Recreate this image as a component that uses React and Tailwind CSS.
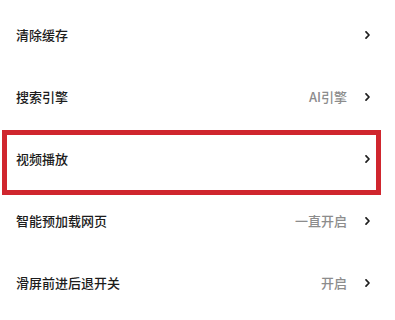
import React from 'react';

const rows = [
  { title: '清除缓存', value: '' },
  { title: '搜索引擎', value: 'AI引擎' },
  { title: '视频播放', value: '', highlight: true },
  { title: '智能预加载网页', value: '一直开启' },
  { title: '滑屏前进后退开关', value: '开启' },
];

const Chevron = () => (
  <svg width="5" height="8" viewBox="0 0 5 8" className="shrink-0">
    <path d="M1 0.8 L4 4 L1 7.2" fill="none" stroke="#1f1f1f" strokeWidth="1.7" strokeLinecap="round" strokeLinejoin="round" />
  </svg>
);

const App = () => {
  return (
    <div
      className="w-[395px] h-[320px] bg-white pt-[4px] overflow-hidden"
      style={{ fontFamily: '"Noto Sans CJK SC", "Noto Sans", sans-serif' }}
    >
      {rows.map((row) => (
        <div key={row.title} className="relative h-[62px] flex items-center pl-[16px] pr-[25px]">
          <span className="text-[13px] font-medium text-[#1c1c1c]">{row.title}</span>
          <div className="ml-auto flex items-center gap-[18px]">
            {row.value && <span className="text-[13px] font-medium text-[#8c8c8c]">{row.value}</span>}
            <Chevron />
          </div>
          {/* red annotation frame */}
          {row.highlight && (
            <div className="absolute top-[2px] left-[2px] right-[14px] h-[65px] border-[5px] border-[#d0262e]" />
          )}
        </div>
      ))}
    </div>
  );
};

export default App;
